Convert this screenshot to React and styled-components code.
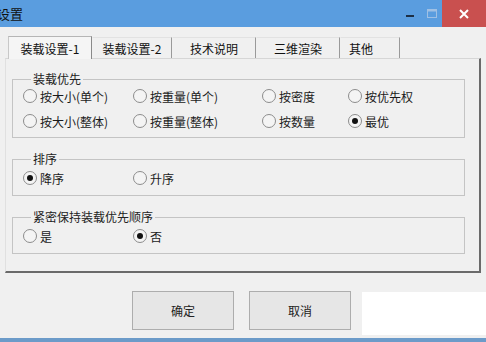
import React from 'react';
import styled, { createGlobalStyle } from 'styled-components';

const GlobalStyle = createGlobalStyle`
  html, body {
    margin: 0;
    padding: 0;
    background: #f0f0f0;
  }
  body {
    font-family: "Noto Sans CJK SC", "Liberation Sans", sans-serif;
    font-size: 12px;
    color: #1a1a1a;
  }
`;

const Window = styled.div`
  width: 486px;
  height: 342px;
  display: flex;
  flex-direction: column;
  background: #f0f0f0;
  overflow: hidden;
`;

const TitleBar = styled.div`
  height: 27px;
  display: flex;
  align-items: center;
  background: #5a9ddf;
  flex-shrink: 0;
`;

const Title = styled.div`
  flex: 1;
  margin-left: -3px;
  font-size: 13px;
  color: #111;
`;

const CtrlButton = styled.div`
  width: ${(p) => p.$w}px;
  height: 100%;
  display: flex;
  align-items: center;
  justify-content: center;
  background: ${(p) => p.$bg || 'transparent'};
`;

const Body = styled.div`
  flex: 1;
  display: flex;
  flex-direction: column;
  padding-top: 9px;
`;

const TabRow = styled.div`
  display: flex;
  align-items: flex-end;
  height: 22px;
  padding-left: 8px;
  position: relative;
  z-index: 1;
`;

const Tab = styled.div`
  width: ${(p) => p.$w}px;
  box-sizing: border-box;
  height: ${(p) => (p.$active ? 23 : 21)}px;
  display: flex;
  align-items: center;
  justify-content: ${(p) => (p.$left ? 'flex-start' : 'center')};
  padding-left: ${(p) => (p.$left ? 8 : 0)}px;
  background: ${(p) => (p.$active ? '#f5f5f5' : '#f0f0f0')};
  border-top: 1px solid ${(p) => (p.$active ? '#b5b5b5' : '#e2e2e2')};
  border-left: 1px solid ${(p) => (p.$active ? '#c8c8c8' : 'transparent')};
  border-right: 1px solid ${(p) => (p.$active ? '#8a8a8a' : '#9a9a9a')};
  margin-bottom: ${(p) => (p.$active ? -1 : 0)}px;
  color: #111;
`;

const Panel = styled.div`
  margin: 0 5px 0 5px;
  height: 215px;
  box-sizing: border-box;
  border-top: 1px solid #d6d6d6;
  border-left: 1px solid #e0e0e0;
  border-right: 2px solid #6a6a6a;
  border-bottom: 2px solid #6a6a6a;
  background: #f0f0f0;
  padding: 13px 14px 0 6px;
  display: flex;
  flex-direction: column;
  gap: 14px;
`;

const Group = styled.fieldset`
  margin: 0;
  border: 1px solid #c4c4c4;
  padding: ${(p) => p.$pt}px 0 ${(p) => p.$pb}px 10px;
  display: grid;
  grid-template-columns: 110px 129px 86px 1fr;
  row-gap: ${(p) => p.$gap || 0}px;
  min-width: 0;
`;

const Legend = styled.legend`
  padding: 0 2px;
  margin-left: 8px;
  line-height: 14px;
  color: #222;
`;

const Option = styled.label`
  display: flex;
  align-items: center;
  gap: 3px;
  height: 16px;
  white-space: nowrap;
`;

const Circle = styled.span`
  width: 14px;
  height: 14px;
  box-sizing: border-box;
  border-radius: 50%;
  border: 1px solid #8c8c8c;
  background: #f4f4f4;
  display: flex;
  align-items: center;
  justify-content: center;
  &::after {
    content: '';
    width: 6px;
    height: 6px;
    border-radius: 50%;
    background: ${(p) => (p.$on ? '#111' : 'transparent')};
  }
`;

const Footer = styled.div`
  display: flex;
  align-items: flex-start;
  padding-top: 18px;
  padding-left: 132px;
  gap: 15px;
  flex: 1;
`;

const Button = styled.div`
  width: 102px;
  height: 39px;
  box-sizing: border-box;
  border: 1px solid #adadad;
  background: #e6e6e6;
  display: flex;
  align-items: center;
  justify-content: center;
  color: #222;
`;

const Blank = styled.div`
  margin-top: 1px;
  margin-left: -4px;
  flex: 1;
  height: 43px;
  background: #ffffff;
`;

const BottomLine = styled.div`
  height: 4px;
  background: #6c9bc9;
  flex-shrink: 0;
`;

function Radio({ label, on }) {
  return (
    <Option>
      <Circle $on={on} />
      {label}
    </Option>
  );
}

const tabs = [
  { label: '装载设置-1', w: 84, active: true },
  { label: '装载设置-2', w: 80 },
  { label: '技术说明', w: 84 },
  { label: '三维渲染', w: 84 },
  { label: '其他', w: 60, left: true },
];

export default function App() {
  return (
    <>
      <GlobalStyle />
      <Window>
        <TitleBar>
          <Title>设置</Title>
          <CtrlButton $w={24}>
            <svg width="9" height="9" viewBox="0 0 9 9">
              <rect x="0" y="6" width="8" height="2" fill="#1d2f45" />
            </svg>
          </CtrlButton>
          <CtrlButton $w={20}>
            <svg width="10" height="9" viewBox="0 0 10 9">
              <rect x="0.5" y="0.5" width="9" height="8" fill="none" stroke="#9fc0e4" />
              <rect x="0.5" y="0.5" width="9" height="2" fill="#9fc0e4" />
            </svg>
          </CtrlButton>
          <CtrlButton $w={44} $bg="#c9504f">
            <svg width="10" height="10" viewBox="0 0 10 10">
              <path d="M1 1 L9 9 M9 1 L1 9" stroke="#fff" strokeWidth="2" />
            </svg>
          </CtrlButton>
        </TitleBar>
        <Body>
          <TabRow>
            {tabs.map((t) => (
              <Tab key={t.label} $w={t.w} $active={t.active} $left={t.left}>
                {t.label}
              </Tab>
            ))}
          </TabRow>
          <Panel>
            <Group $pt={2} $pb={8} $gap={9}>
              <Legend>装载优先</Legend>
              <Radio label="按大小(单个)" />
              <Radio label="按重量(单个)" />
              <Radio label="按密度" />
              <Radio label="按优先权" />
              <Radio label="按大小(整体)" />
              <Radio label="按重量(整体)" />
              <Radio label="按数量" />
              <Radio label="最优" on />
            </Group>
            <Group $pt={4} $pb={9}>
              <Legend>排序</Legend>
              <Radio label="降序" on />
              <Radio label="升序" />
            </Group>
            <Group $pt={4} $pb={9}>
              <Legend>紧密保持装载优先顺序</Legend>
              <Radio label="是" />
              <Radio label="否" on />
            </Group>
          </Panel>
          <Footer>
            <Button>确定</Button>
            <Button>取消</Button>
            <Blank />
          </Footer>
        </Body>
        <BottomLine />
      </Window>
    </>
  );
}
